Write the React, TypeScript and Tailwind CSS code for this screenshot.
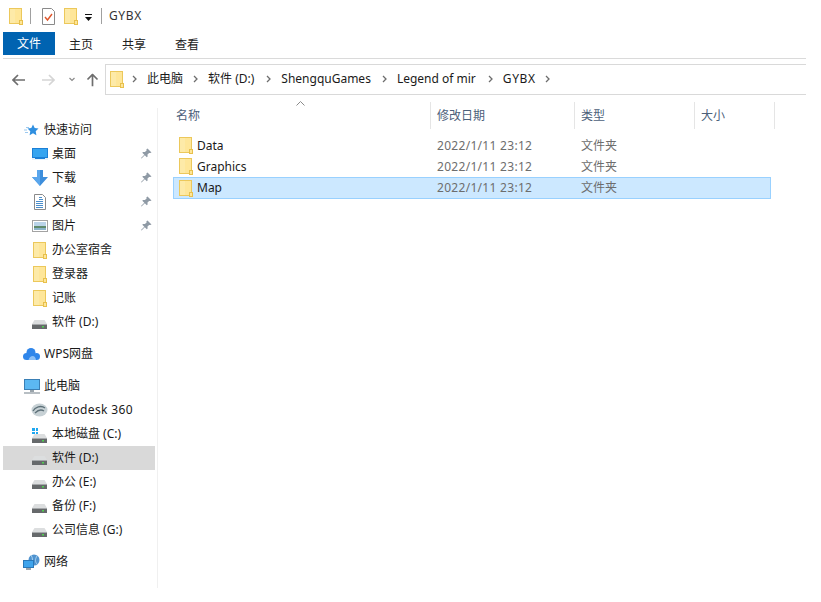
import React from 'react'

const FolderIcon = ({ className = '' }: { className?: string }) => (
  <svg className={className} width="14" height="17" viewBox="0 0 14 17">
    <rect x="0.5" y="0.5" width="12" height="15" fill="#fee699" stroke="#ecc85b" />
    <rect x="1" y="1" width="5" height="14" fill="#fdeaa8" />
    <rect x="10.5" y="12.5" width="3" height="4" fill="#fee699" stroke="#e8c04c" />
  </svg>
)

const DriveIcon = () => (
  <svg className="mt-[5px]" width="15" height="9" viewBox="0 0 15 9">
    <path d="M2.5 0h10L15 4H0z" fill="#dcdedf" />
    <rect x="0" y="4" width="15" height="5" fill="#66696b" />
    <rect x="0" y="4" width="15" height="1" fill="#a5a8aa" />
    <rect x="10" y="6" width="2" height="1.5" fill="#4fd04f" />
  </svg>
)

const PinIcon = () => (
  <svg width="11" height="11" viewBox="0 0 11 11">
    <path d="M6.5 0.5l4 4-1.2.6-1.2-.2-1.6 1.7.1 1.9-.8.7-2-2-3.3 3.3-.5-.5 3.3-3.3-2-2 .7-.8 1.9.1 1.7-1.6-.2-1.2z" fill="#8f9aa5" />
  </svg>
)

const Sep = () => <div className="w-px h-[16px] bg-[#a0a0a0]" />

const Chevron = ({ className = '' }: { className?: string }) => (
  <svg className={className} width="5" height="8" viewBox="0 0 5 8">
    <path d="M1 1l3 3-3 3" fill="none" stroke="#6d6d6d" strokeWidth="1.3" />
  </svg>
)

const Arrow = ({ color, rotate = '' }: { color: string; rotate?: string }) => (
  <svg className={rotate} width="13" height="12" viewBox="0 0 13 12">
    <path d="M6 1L1 6l5 5M1.5 6H13" fill="none" stroke={color} strokeWidth="1.7" />
  </svg>
)

// label, margin of the chevron after it
const crumbs: [string, string][] = [
  ['此电脑', 'ml-[10px]'],
  ['软件 (D:)', 'ml-[12px]'],
  ['ShengquGames', 'ml-[11px]'],
  ['Legend of mir', 'ml-[12px]'],
  ['GYBX', 'ml-[9px]'],
]

const QuickIcon = () => (
  <svg width="15" height="15" viewBox="0 0 15 15">
    <path d="M9 1.5l1.7 3.6 3.8.5-2.8 2.7.7 3.9-3.4-1.9-3.4 1.9.7-3.9-2.8-2.7 3.8-.5z" fill="#2f8fe0" />
    <path d="M0 7h3M1 9.5h3M2 4.5h3" stroke="#9cc9ef" strokeWidth="1" />
  </svg>
)

const DesktopIcon = () => (
  <svg width="16" height="12" viewBox="0 0 16 12">
    <rect x="0" y="0" width="16" height="12" fill="#1b7fd6" />
    <path d="M1 1h14v8H1z" fill="#35a4f0" />
    <rect x="0" y="10" width="16" height="2" fill="#e8f2fb" />
    <rect x="3" y="10" width="10" height="1" fill="#1b7fd6" />
  </svg>
)

const DownloadIcon = () => (
  <svg width="16" height="16" viewBox="0 0 16 16">
    <path d="M5 0h6v7h5l-8 9-8-9h5z" fill="#3d8edc" />
    <path d="M5 0h3v16L0 7h5z" fill="#5aa6ec" />
  </svg>
)

const DocIcon = () => (
  <svg width="12" height="16" viewBox="0 0 12 16">
    <path d="M0.5 0.5h8l3 3v12h-11z" fill="#fff" stroke="#8a8a8a" />
    <path d="M5 3.5h3M5 5.5h4M2 7.5h7M2 9.5h7M2 11.5h7M2 13.5h7" stroke="#4b8ecb" strokeWidth="1" />
  </svg>
)

const PicIcon = () => (
  <svg width="16" height="12" viewBox="0 0 16 12">
    <rect x="0.5" y="0.5" width="15" height="11" fill="#fff" stroke="#a3a3a3" />
    <rect x="2" y="2" width="12" height="4" fill="#b9d3e8" />
    <rect x="2" y="6" width="12" height="2" fill="#5f8a6c" />
    <rect x="2" y="8" width="12" height="2" fill="#8ab3c9" />
  </svg>
)

const CloudIcon = () => (
  <svg width="17" height="12" viewBox="0 0 17 12">
    <circle cx="3.5" cy="8.5" r="3.5" fill="#2f86ea" />
    <circle cx="8" cy="4.5" r="4.5" fill="#2f86ea" />
    <circle cx="13.5" cy="8.5" r="3.5" fill="#2f86ea" />
    <rect x="3.5" y="7" width="10" height="5" fill="#2f86ea" />
    <path d="M5.5 12c.7-2.6 2.4-4 4.2-4s2.8 1.6 3.3 4z" fill="#8cc0f6" />
  </svg>
)

const PcIcon = () => (
  <svg width="16" height="15" viewBox="0 0 16 15">
    <rect x="0.5" y="0.5" width="15" height="10" fill="#5cb8f2" stroke="#3a7fb5" />
    <rect x="6" y="11" width="4" height="2" fill="#9aa4ab" />
    <rect x="0" y="13" width="16" height="2" fill="#b8bfc4" />
  </svg>
)

const AutodeskIcon = () => (
  <svg width="17" height="14" viewBox="0 0 17 14">
    <ellipse cx="8.5" cy="7" rx="8" ry="6.5" fill="#c7d1d5" />
    <path d="M2 8c2-4 8-6 12-3M4 10c3-3 6-4 9-2" fill="none" stroke="#5d7078" strokeWidth="1.3" />
  </svg>
)

const WinDriveIcon = () => (
  <span className="relative flex w-[15px] h-[18px] items-end">
    <DriveIcon />
    <span className="absolute left-0 top-[3px] grid grid-cols-2 gap-px w-[6px]">
      <span className="w-[2.5px] h-[2.5px] bg-[#1ea7f0]" />
      <span className="w-[2.5px] h-[2.5px] bg-[#1ea7f0]" />
      <span className="w-[2.5px] h-[2.5px] bg-[#1ea7f0]" />
      <span className="w-[2.5px] h-[2.5px] bg-[#1ea7f0]" />
    </span>
  </span>
)

const NetIcon = () => (
  <svg width="17" height="16" viewBox="0 0 17 16">
    <circle cx="11" cy="6" r="5.5" fill="#4f93cf" />
    <path d="M8 1c2 3 2 7 0 10M14 2c-2 3-2 6 0 8" stroke="#a9d2f0" fill="none" />
    <rect x="0.5" y="6.5" width="10" height="7" fill="#3fa4ec" stroke="#2a78b8" />
    <rect x="3" y="14" width="5" height="2" fill="#9aa4ab" />
  </svg>
)

const NavRow = ({ icon, label, pin, top, selected, gap, wide }: { icon: React.ReactNode; label: string; pin?: boolean; top?: boolean; selected?: boolean; gap?: boolean; wide?: boolean }) => (
  <div className={`relative flex items-center h-[24px] w-[152px] ${selected ? 'bg-[#d9d9d9]' : ''} ${gap ? 'mt-[8px]' : ''} ${top ? 'pl-[20px]' : 'pl-[28px]'}`}>
    <span className="w-[17px] h-[18px] flex items-center justify-center shrink-0">{icon}</span>
    <span className={`ml-[4px] text-[#1a1a1a] whitespace-nowrap ${wide ? 'tracking-[0.35px]' : ''}`}>{label}</span>
    {pin && <span className="absolute left-[138px] top-[6px]"><PinIcon /></span>}
  </div>
)

const HeaderCell = ({ label, w, pl }: { label: string; w: string; pl: string }) => (
  <div className={`${w} ${pl} h-[27px] flex items-center border-r border-[#e5e5e5] text-[#4c607a] shrink-0`}>{label}</div>
)

const files = ['Data', 'Graphics', 'Map']

export default function App() {
  return (
    <div className="w-[821px] h-[602px] bg-white pl-[3px] text-[12px] leading-none overflow-hidden" style={{ fontFamily: '"Noto Sans", "Noto Sans CJK SC", sans-serif' }}>
      {/* title bar */}
      <div className="h-[32px] flex items-center pl-[6px] text-[#222]">
        <FolderIcon />
        <span className="ml-[7px]"><Sep /></span>
        <svg className="ml-[11px]" width="13" height="17" viewBox="0 0 13 17">
          <path d="M0.5 0.5h9l3 3v13h-12z" fill="#fff" stroke="#8a8a8a" />
          <path d="M3 9l2.5 3L10 6" fill="none" stroke="#e0562b" strokeWidth="1.4" />
        </svg>
        <FolderIcon className="ml-[9px]" />
        <svg className="ml-[7px] mt-[3px]" width="7" height="7" viewBox="0 0 7 7">
          <path d="M0 0h7v1H0zM0 3h7L3.5 7z" fill="#111" />
        </svg>
        <span className="ml-[9px]"><Sep /></span>
        <span className="ml-[7px] text-[#333] tracking-[0.6px]">GYBX</span>
      </div>

      {/* ribbon tabs */}
      <div className="h-[27px] w-[803px] border-b border-[#dadada] flex items-start text-[#222]">
        <div className="w-[52px] h-[23px] bg-[#0063b1] text-white flex items-center justify-center">文件</div>
        <span className="ml-[14px] mt-[7px]">主页</span>
        <span className="ml-[29px] mt-[7px]">共享</span>
        <span className="ml-[29px] mt-[7px]">查看</span>
      </div>

      {/* nav + address */}
      <div className="h-[36px] w-[803px] flex items-end">
        <div className="h-[31px] w-[102px] flex items-center pl-[9px] shrink-0">
          <Arrow color="#6e6e6e" />
          <span className="ml-[17px]"><Arrow color="#d5d5d5" rotate="rotate-180" /></span>
          <svg className="ml-[14px]" width="6" height="5" viewBox="0 0 6 5">
            <path d="M0.5 1l2.5 2.5L5.5 1" fill="none" stroke="#8a8a8a" strokeWidth="1.2" />
          </svg>
          <span className="ml-[11px]"><Arrow color="#6e6e6e" rotate="rotate-90" /></span>
        </div>
        <div className="flex-1 h-[31px] border-t border-b border-l border-[#d9d9d9] flex items-center pl-[4px] pb-[1px] text-[#1a1a1a]">
          <FolderIcon />
          <Chevron className="ml-[8px]" />
          {crumbs.map(([label, ml]) => (
            <React.Fragment key={label}>
              <span className={`ml-[10px] whitespace-nowrap ${label === 'GYBX' ? 'tracking-[0.6px]' : ''}`}>{label}</span>
              <Chevron className={ml} />
            </React.Fragment>
          ))}
        </div>
      </div>

      <div className="flex">
        {/* sidebar */}
        <div className="w-[154px] h-[470px] mt-[13px] border-r border-[#f0f0f0] box-content shrink-0 pt-[10px]">
          <NavRow top icon={<QuickIcon />} label="快速访问" />
          <NavRow icon={<DesktopIcon />} label="桌面" pin />
          <NavRow icon={<DownloadIcon />} label="下载" pin />
          <NavRow icon={<DocIcon />} label="文档" pin />
          <NavRow icon={<PicIcon />} label="图片" pin />
          <NavRow icon={<FolderIcon />} label="办公室宿舍" />
          <NavRow icon={<FolderIcon />} label="登录器" />
          <NavRow icon={<FolderIcon />} label="记账" />
          <NavRow icon={<DriveIcon />} label="软件 (D:)" />
          <NavRow top gap icon={<CloudIcon />} label="WPS网盘" />
          <NavRow top gap icon={<PcIcon />} label="此电脑" />
          <NavRow wide icon={<AutodeskIcon />} label="Autodesk 360" />
          <NavRow icon={<WinDriveIcon />} label="本地磁盘 (C:)" />
          <NavRow selected icon={<DriveIcon />} label="软件 (D:)" />
          <NavRow icon={<DriveIcon />} label="办公 (E:)" />
          <NavRow icon={<DriveIcon />} label="备份 (F:)" />
          <NavRow icon={<DriveIcon />} label="公司信息 (G:)" />
          <NavRow top gap icon={<NetIcon />} label="网络" />
        </div>

        {/* file list */}
        <div className="ml-[15px] flex-1">
          <div className="relative flex mt-[7px] h-[27px]">
            <svg className="absolute left-[123px] -top-[1px]" width="9" height="5" viewBox="0 0 9 5">
              <path d="M0.5 4.5l4-4 4 4" fill="none" stroke="#8a8a8a" />
            </svg>
            <HeaderCell label="名称" w="w-[258px]" pl="pl-[3px]" />
            <HeaderCell label="修改日期" w="w-[144px]" pl="pl-[6px]" />
            <HeaderCell label="类型" w="w-[120px]" pl="pl-[6px]" />
            <HeaderCell label="大小" w="w-[80px]" pl="pl-[6px]" />
          </div>
          <div className="mt-[6px]">
            {files.map((name) => (
              <div key={name} className={`w-[598px] flex items-center border ${name === 'Map' ? 'h-[22px] bg-[#cce8ff] border-[#99d1ff]' : 'h-[21px] border-transparent'}`}>
                <FolderIcon className="ml-[5px]" />
                <span className="ml-[4px] w-[240px] text-[#1a1a1a]">{name}</span>
                <span className="w-[144px] text-[#6d6d6d] tracking-[0.3px]">2022/1/11 23:12</span>
                <span className="text-[#6d6d6d]">文件夹</span>
              </div>
            ))}
          </div>
        </div>
      </div>
    </div>
  )
}
